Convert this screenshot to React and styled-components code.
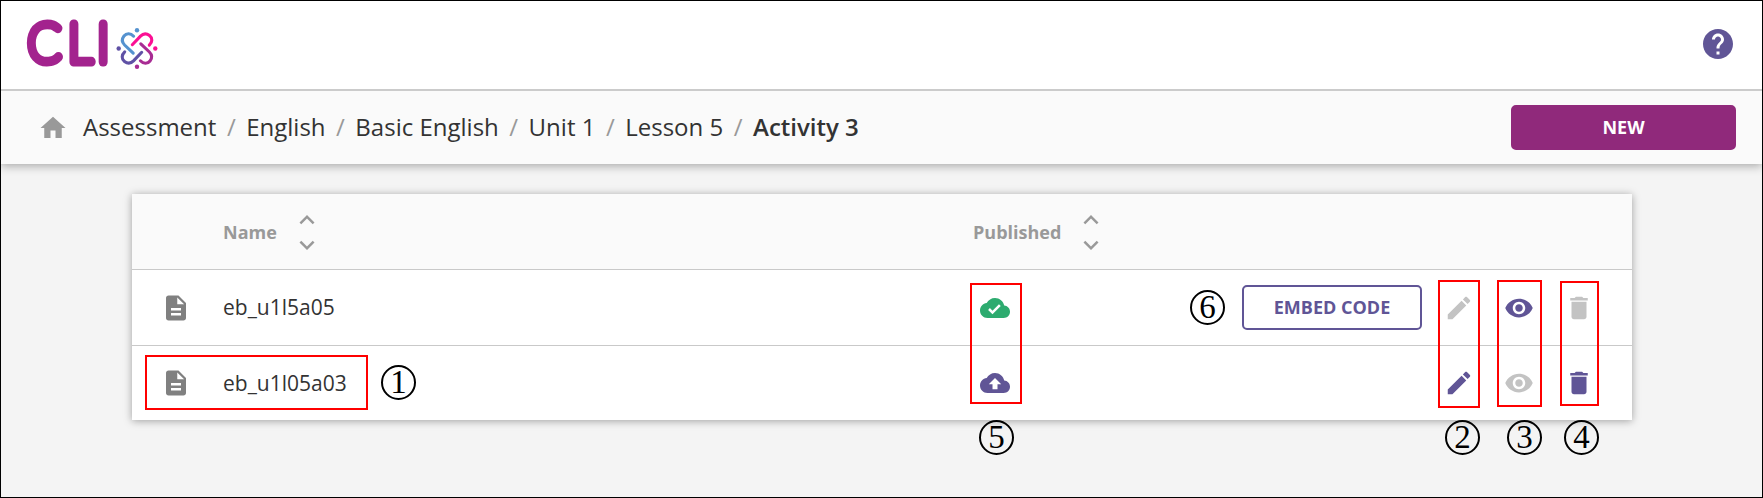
import React from 'react';
import styled, { createGlobalStyle } from 'styled-components';

const GlobalStyle = createGlobalStyle`
  *, *::before, *::after { box-sizing: border-box; }
  body { margin: 0; font-family: "Open Sans", "Noto Sans", sans-serif; color: #333; }
`;

const violet = '#605596';
const muted = '#c3c3c3';

const Page = styled.div`
  position: relative;
  width: 1763px;
  height: 498px;
  border: 1px solid #000;
  background: #f4f4f4;
  overflow: hidden;
`;

const Header = styled.header`
  position: relative;
  z-index: 1;
  display: flex;
  align-items: center;
  justify-content: space-between;
  height: 90px;
  padding: 0 26px 2px 22px;
  background: #fff;
  border-bottom: 2px solid #cbcbcb;
`;

const LogoSvg = styled.svg`
  display: block;
  width: 140px;
  height: 80px;
  overflow: visible;
`;

const Wordmark = styled.text`
  font-family: Lato, sans-serif;
  font-weight: 100;
  font-size: 53.2px;
  fill: #a3238e;
  stroke: #a3238e;
  stroke-width: 9.2px;
  stroke-linejoin: round;
`;

const Toolbar = styled.nav`
  display: flex;
  align-items: center;
  height: 73px;
  padding: 0 26px 0 37px;
  background: #fafafa;
  box-shadow: 0 2px 9px rgba(0, 0, 0, 0.32);
`;

const Crumbs = styled.ol`
  display: flex;
  flex: 1;
  margin: 0 0 0 15px;
  padding: 0 0 2px;
  list-style: none;
  font-size: 24px;
  line-height: 33px;
`;

const Crumb = styled.li`
  font-weight: ${(p) => (p.$current ? 600 : 400)};
  white-space: nowrap;
  &:not(:last-child)::after {
    content: "/";
    margin: 0 10.5px;
    color: #999;
  }
`;

const Button = styled.button`
  width: ${(p) => p.$width}px;
  height: 45px;
  padding: 0 0 2px;
  border: 2px solid ${(p) => (p.$outline ? violet : '#90297b')};
  border-radius: 5px;
  background: ${(p) => (p.$outline ? '#fff' : '#90297b')};
  color: ${(p) => (p.$outline ? violet : '#fff')};
  font: 700 18px/24px "Open Sans", sans-serif;
`;

const IconSvg = styled.svg`
  display: block;
  flex: none;
  width: ${(p) => p.$size}px;
  height: ${(p) => p.$size}px;
  fill: ${(p) => p.$color};
`;

const Card = styled.section`
  width: 1500px;
  margin: 30px 0 0 131px;
  background: #fff;
  box-shadow: 0 1px 8px rgba(0, 0, 0, 0.35);
`;

const Row = styled.div`
  display: grid;
  grid-template-columns: 62px 757px 1fr auto;
  align-items: center;
  height: ${(p) => (p.$last ? 74 : 76)}px;
  padding: 0 38px 0 29px;
  background: ${(p) => (p.$head ? '#fafafa' : '#fff')};
  border-bottom: ${(p) => (p.$last ? 'none' : '1px solid #c9c9c9')};
`;

const Heading = styled.div`
  display: flex;
  align-items: center;
  gap: 15px;
  margin-left: ${(p) => p.$shift || 0}px;
  color: #999;
  font-size: 18px;
  font-weight: 700;
`;

const Sorter = styled.div`
  display: grid;
  grid-template-rows: 25px 25px;
  height: 53px;
`;

const FileName = styled.span`
  padding-bottom: 1px;
  font-size: 21px;
  line-height: 28px;
`;

const Actions = styled.div`
  display: flex;
  align-items: center;
  gap: 30px;
`;

const ButtonSlot = styled.div`
  margin-right: -8px;
`;

const Outline = styled.div`
  position: absolute;
  left: ${(p) => p.$x - 1}px;
  top: ${(p) => p.$y - 1}px;
  width: ${(p) => p.$w}px;
  height: ${(p) => p.$h}px;
  border: 2px solid #f00;
`;

const Marker = styled.div`
  position: absolute;
  left: ${(p) => p.$x - 1}px;
  top: ${(p) => p.$y - 1}px;
  display: flex;
  align-items: center;
  justify-content: center;
  width: 35px;
  height: 35px;
  border: 2px solid #000;
  border-radius: 50%;
  color: #000;
  font: 33px/31px "Liberation Serif", serif;
`;

const cloud = 'M19.35 10.04C18.67 6.59 15.64 4 12 4 9.11 4 6.6 5.64 5.35 8.04 2.34 8.36 0 10.91 0 14c0 3.31 2.69 6 6 6h13c2.76 0 5-2.24 5-5 0-2.64-2.05-4.78-4.65-4.96z';
const paths = {
  home: 'M10 20v-6h4v6h5v-8h3L12 3 2 12h3v8z',
  help: 'M12 2C6.48 2 2 6.48 2 12s4.48 10 10 10 10-4.48 10-10S17.52 2 12 2zm1 17h-2v-2h2v2zm2.07-7.75l-.9.92C13.45 12.9 13 13.5 13 15h-2v-.5c0-1.1.45-2.1 1.17-2.83l1.24-1.26c.37-.36.59-.86.59-1.41 0-1.1-.9-2-2-2s-2 .9-2 2H8c0-2.21 1.79-4 4-4s4 1.79 4 4c0 .88-.36 1.68-.93 2.25z',
  file: 'M14 2H6c-1.1 0-1.99.9-1.99 2L4 20c0 1.1.89 2 1.99 2H18c1.1 0 2-.9 2-2V8l-6-6zm2 16H8v-2h8v2zm0-4H8v-2h8v2zm-3-5V3.5L18.5 9H13z',
  published: `${cloud}M10 17l-3.5-3.5 1.41-1.41L10 14.17 15.18 9l1.41 1.41L10 17z`,
  upload: `${cloud}M14 13v4h-4v-4H7l5-5 5 5h-3z`,
  edit: 'M3 17.25V21h3.75L17.81 9.94l-3.75-3.75L3 17.25zM20.71 7.04c.39-.39.39-1.02 0-1.41l-2.34-2.34c-.39-.39-1.02-.39-1.41 0l-1.83 1.83 3.75 3.75 1.83-1.83z',
  view: 'M12 4.5C7 4.5 2.73 7.61 1 12c1.73 4.39 6 7.5 11 7.5s9.27-3.11 11-7.5c-1.73-4.39-6-7.5-11-7.5zM12 17c-2.76 0-5-2.24-5-5s2.24-5 5-5 5 2.24 5 5-2.24 5-5 5zm0-8c-1.66 0-3 1.34-3 3s1.34 3 3 3 3-1.34 3-3-1.34-3-3-3z',
  remove: 'M6 19c0 1.1.9 2 2 2h8c1.1 0 2-.9 2-2V7H6v12zM19 4h-3.5l-1-1h-5l-1 1H5v2h14V4z',
  up: 'M12 8l-6 6 1.41 1.41L12 10.83l4.59 4.58L18 14z',
  down: 'M16.59 8.59L12 13.17 7.41 8.59 6 10l6 6 6-6z',
};

const Icon = ({ name, size = 30, color = violet }) => (
  <IconSvg viewBox="0 0 24 24" $size={size} $color={color} aria-hidden="true">
    <path fillRule="evenodd" d={paths[name]} />
  </IconSvg>
);

const petals = [
  [0, '#5592cf'],
  [90, '#fb0f93'],
  [180, '#a82c93'],
  [270, '#5f51a5'],
];

const Logo = () => (
  <LogoSvg viewBox="23 4 140 80">
    <Wordmark y="62.5" x="30.6 74.7 107" transform="scale(0.91 1)">CLI</Wordmark>
    {petals.map(([angle, color]) => (
      <g key={angle} transform={`rotate(${angle} 137 48.5)`}>
        <path
          d="M133.6 36.2C130.6 33 126.5 32.8 124 36C121.7 39 122 42.4 124.6 45L133.2 53.2"
          fill="none"
          stroke={color}
          strokeWidth="3.1"
          strokeLinecap="round"
        />
        <circle cx="137" cy="30.2" r="2.2" fill={color} />
      </g>
    ))}
  </LogoSvg>
);

const SortHeading = ({ children, shift }) => (
  <Heading $shift={shift}>
    {children}
    <Sorter>
      <Icon name="up" color="#999" />
      <Icon name="down" color="#999" />
    </Sorter>
  </Heading>
);

const crumbs = ['Assessment', 'English', 'Basic English', 'Unit 1', 'Lesson 5', 'Activity 3'];
const files = [
  { name: 'eb_u1l5a05', published: true },
  { name: 'eb_u1l05a03', published: false },
];
const outlines = [
  [145, 355, 223, 55],
  [970, 283, 52, 121],
  [1438, 280, 42, 128],
  [1497, 280, 45, 127],
  [1560, 281, 39, 125],
];
const markers = [
  [1, 381, 365],
  [2, 1445, 420],
  [3, 1507, 420],
  [4, 1564, 420],
  [5, 979, 420],
  [6, 1190, 290],
];

export default function App() {
  return (
    <Page>
      <GlobalStyle />
      <Header>
        <Logo />
        <Icon name="help" size={36} />
      </Header>
      <Toolbar>
        <Icon name="home" color="#999" />
        <Crumbs>
          {crumbs.map((label, i) => (
            <Crumb key={label} $current={i === crumbs.length - 1}>{label}</Crumb>
          ))}
        </Crumbs>
        <Button $width={225}>NEW</Button>
      </Toolbar>
      <Card>
        <Row $head>
          <span />
          <SortHeading>Name</SortHeading>
          <SortHeading shift={-7}>Published</SortHeading>
        </Row>
        {files.map((file, i) => (
          <Row key={file.name} $last={i === files.length - 1}>
            <Icon name="file" color="#808080" />
            <FileName>{file.name}</FileName>
            <Icon name={file.published ? 'published' : 'upload'} color={file.published ? '#2dab6f' : violet} />
            <Actions>
              {file.published && (
                <ButtonSlot>
                  <Button $width={180} $outline>EMBED CODE</Button>
                </ButtonSlot>
              )}
              <Icon name="edit" color={file.published ? muted : violet} />
              <Icon name="view" color={file.published ? violet : muted} />
              <Icon name="remove" color={file.published ? muted : violet} />
            </Actions>
          </Row>
        ))}
      </Card>
      {outlines.map(([x, y, w, h]) => (
        <Outline key={x} $x={x} $y={y} $w={w} $h={h} />
      ))}
      {markers.map(([n, x, y]) => (
        <Marker key={n} $x={x} $y={y}>{n}</Marker>
      ))}
    </Page>
  );
}
